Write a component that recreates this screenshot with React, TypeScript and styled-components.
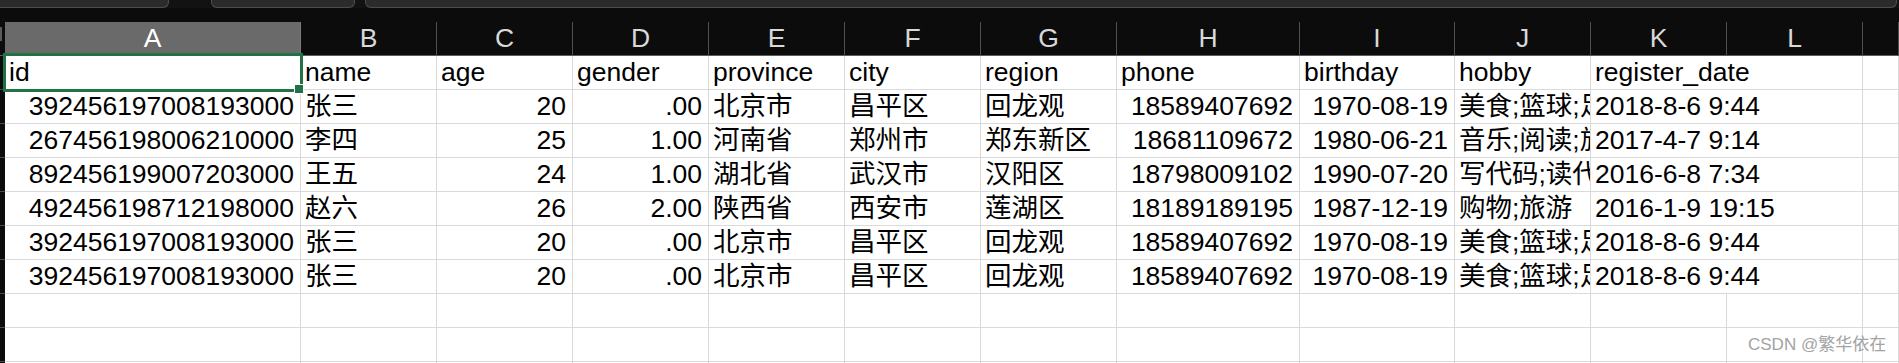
import React from 'react';
import styled, { createGlobalStyle } from 'styled-components';

const GlobalStyle = createGlobalStyle`
  html, body {
    margin: 0;
    padding: 0;
    background: #0c0c0c;
  }
  body {
    width: 1899px;
    height: 363px;
    overflow: hidden;
    font-family: "Liberation Sans", "Noto Sans CJK SC", sans-serif;
  }
`;

type Align = 'left' | 'right';

const COLUMN_WIDTHS = [296, 136, 136, 136, 136, 136, 136, 183, 155, 136, 136, 136];
const LETTERS = ['A', 'B', 'C', 'D', 'E', 'F', 'G', 'H', 'I', 'J', 'K', 'L', 'M'];
const ALIGNS: Align[] = ['right', 'left', 'right', 'right', 'left', 'left', 'left', 'right', 'right', 'left', 'left', 'left', 'left'];
const CLIP_COL = 9;
const SPILL_COL = 10;

const HEADER = ['id', 'name', 'age', 'gender', 'province', 'city', 'region', 'phone', 'birthday', 'hobby', 'register_date', '', ''];

const ROW_ZHANG = ['392456197008193000', '张三', '20', '.00', '北京市', '昌平区', '回龙观', '18589407692', '1970-08-19', '美食;篮球;足球', '2018-8-6 9:44', '', ''];

const DATA: string[][] = [
  ROW_ZHANG,
  ['267456198006210000', '李四', '25', '1.00', '河南省', '郑州市', '郑东新区', '18681109672', '1980-06-21', '音乐;阅读;旅游', '2017-4-7 9:14', '', ''],
  ['892456199007203000', '王五', '24', '1.00', '湖北省', '武汉市', '汉阳区', '18798009102', '1990-07-20', '写代码;读代码;算法', '2016-6-8 7:34', '', ''],
  ['492456198712198000', '赵六', '26', '2.00', '陕西省', '西安市', '莲湖区', '18189189195', '1987-12-19', '购物;旅游', '2016-1-9 19:15', '', ''],
  ROW_ZHANG,
  ROW_ZHANG,
];

const EMPTY_ROWS = 4;

const Page = styled.div`
  position: relative;
  width: 1899px;
  height: 363px;
  overflow: hidden;
  background: #0c0c0c;
`;

const TopStrip = styled.div`
  display: flex;
  height: 8px;
  background: #121212;
`;

const Tab = styled.div<{ $width?: number; $gapLeft?: number; $edge?: boolean; $gapRight?: number }>`
  box-sizing: border-box;
  height: 8px;
  flex: ${(p) => (p.$width ? `0 0 ${p.$width}px` : '1 1 auto')};
  margin-left: ${(p) => p.$gapLeft ?? 0}px;
  margin-right: ${(p) => p.$gapRight ?? 0}px;
  background: #2b2b2b;
  border: 1px solid #4d4d4d;
  border-top: none;
  border-left-width: ${(p) => (p.$edge ? 0 : 1)}px;
  border-radius: ${(p) => (p.$edge ? '0 0 6px 0' : '0 0 6px 6px')};
`;

const ToolbarGap = styled.div`
  height: 14px;
  background: #0c0c0c;
`;

const Sheet = styled.div`
  display: grid;
  grid-template-columns: 5px ${COLUMN_WIDTHS.map((w) => `${w}px`).join(' ')} 1fr;
  grid-auto-rows: 34px;
  background: #ffffff;
  font-family: "Liberation Sans", "Noto Sans CJK SC", sans-serif;
  font-size: 26.5px;
`;

const Corner = styled.div`
  position: relative;
  box-sizing: border-box;
  background: #0c0c0c;
  border-bottom: 1px solid #5c5c5c;
  &::before {
    content: '';
    position: absolute;
    left: 0;
    top: 5px;
    width: 2px;
    height: 14px;
    background: #5a5a5a;
  }
`;

const ColumnHeader = styled.div<{ $active?: boolean }>`
  box-sizing: border-box;
  background: ${(p) => (p.$active ? '#6a6a6a' : '#0c0c0c')};
  color: ${(p) => (p.$active ? '#ffffff' : '#d9d9d9')};
  border-right: 1px solid ${(p) => (p.$active ? '#7a7a7a' : '#4f4f4f')};
  border-bottom: 1px solid #5c5c5c;
  text-align: center;
  line-height: 33px;
  font-size: 26.5px;
  white-space: nowrap;
  overflow: hidden;
`;

const RowHead = styled.div`
  box-sizing: border-box;
  background: #0c0c0c;
  border-bottom: 1px solid #4a4a4a;
`;

const Cell = styled.div<{ $align: Align; $clip?: boolean; $spill?: boolean }>`
  position: relative;
  box-sizing: border-box;
  padding: 0 6px 0 4px;
  border-bottom: 1px solid #dadada;
  border-right: ${(p) => (p.$spill ? 'none' : '1px solid #dadada')};
  color: #000000;
  line-height: 33px;
  text-align: ${(p) => p.$align};
  white-space: nowrap;
  overflow: ${(p) => (p.$clip ? 'hidden' : 'visible')};
  min-width: 0;
`;

const Selection = styled.div`
  position: absolute;
  left: -2px;
  top: -3px;
  width: 300px;
  height: 39px;
  box-sizing: border-box;
  border: 3px solid #217346;
  pointer-events: none;
  z-index: 2;
`;

const FillHandle = styled.div`
  position: absolute;
  right: -3px;
  bottom: -4px;
  width: 8px;
  height: 8px;
  background: #217346;
  box-shadow: 0 0 0 1px #ffffff;
`;

const Watermark = styled.div`
  position: absolute;
  left: 1748px;
  top: 335px;
  font-family: "Liberation Sans", "Noto Sans CJK SC", sans-serif;
  font-size: 17px;
  line-height: 20px;
  color: #a3a3a3;
  white-space: nowrap;
  z-index: 3;
`;

const App: React.FC = () => {
  const rows: string[][] = [HEADER, ...DATA];
  for (let i = 0; i < EMPTY_ROWS; i++) rows.push(LETTERS.map(() => ''));

  return (
    <>
      <GlobalStyle />
      <Page>
        <TopStrip>
          <Tab $width={169} $edge />
          <Tab $width={144} $gapLeft={42} />
          <Tab $gapLeft={10} $gapRight={2} />
        </TopStrip>
        <ToolbarGap />
        <Sheet>
          <Corner />
          {LETTERS.map((l, i) => (
            <ColumnHeader key={l} $active={i === 0}>
              {l === 'M' ? '' : l}
            </ColumnHeader>
          ))}
          {rows.map((row, r) => (
            <React.Fragment key={r}>
              <RowHead />
              {row.map((value, c) => {
                const isHeaderRow = r === 0;
                const align: Align = isHeaderRow ? 'left' : ALIGNS[c];
                const spill = c === SPILL_COL && value !== '';
                return (
                  <Cell key={c} $align={align} $clip={c === CLIP_COL} $spill={spill}>
                    {value}
                    {r === 0 && c === 0 && (
                      <Selection>
                        <FillHandle />
                      </Selection>
                    )}
                  </Cell>
                );
              })}
            </React.Fragment>
          ))}
        </Sheet>
        <Watermark>CSDN @繁华依在</Watermark>
      </Page>
    </>
  );
};

export default App;
